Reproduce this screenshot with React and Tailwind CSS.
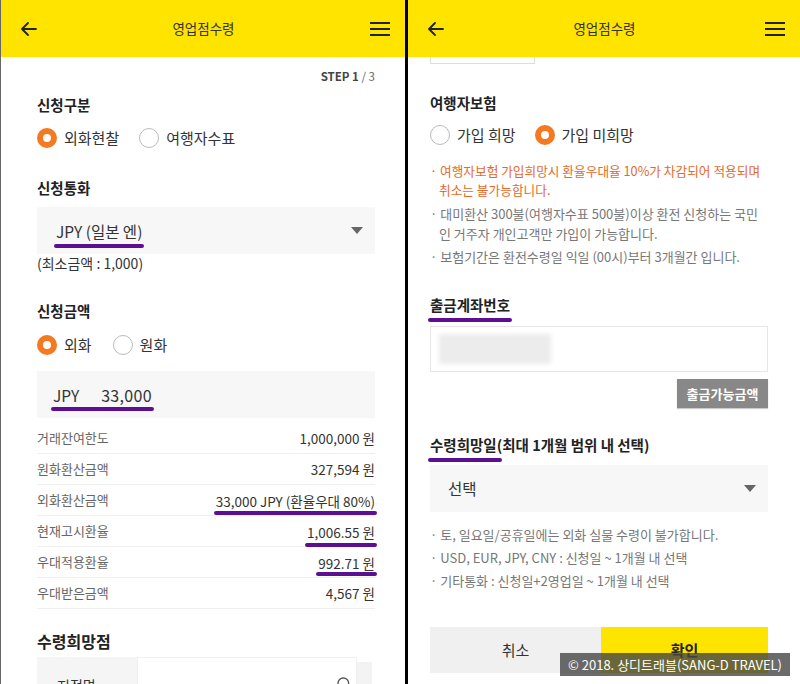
import { Search } from 'lucide-react';

const FONT = { fontFamily: '"Noto Sans CJK KR", "Noto Sans", sans-serif' };

function Header() {
  return (
    <div className="h-[57px] shrink-0 bg-[#FFE400] flex items-center justify-between pl-[19px] pr-[14px]">
      <svg width="18" height="16" viewBox="0 0 18 16" fill="none" stroke="#222" strokeWidth="1.8" strokeLinecap="round" strokeLinejoin="round">
        <path d="M16 8H2M8 2L2 8l6 6" />
      </svg>
      <span className="text-[13.5px] text-[#333]">영업점수령</span>
      <svg width="22" height="16" viewBox="0 0 22 16" fill="none" stroke="#222" strokeWidth="2">
        <path d="M1 2h20M1 8h20M1 14h20" />
      </svg>
    </div>
  );
}

function Radio({ on, label, className = '' }) {
  return (
    <div className={`flex items-center gap-[7px] ${className}`}>
      {on ? (
        <span className="w-[20px] h-[20px] rounded-full border-[6px] border-[#F47920] bg-white" />
      ) : (
        <span className="w-[20px] h-[20px] rounded-full border border-[#bbb] bg-white" />
      )}
      <span className="text-[15px] text-[#333]">{label}</span>
    </div>
  );
}

function Mark({ children, className = '' }) {
  return (
    <span className="relative inline-block">
      {children}
      <span className={`absolute left-[-2px] right-[-2px] h-[4px] rounded-full bg-[#5d0f93] ${className}`} />
    </span>
  );
}

function Caret() {
  return (
    <svg width="12" height="7" viewBox="0 0 12 7">
      <path d="M0 0h12L6 7z" fill="#666" />
    </svg>
  );
}

const ROWS = [
  ['거래잔여한도', '1,000,000 원'],
  ['원화환산금액', '327,594 원'],
  ['외화환산금액', '33,000 JPY (환율우대 80%)', 'top-[23px]'],
  ['현재고시환율', '1,006.55 원', 'top-[24px]'],
  ['우대적용환율', '992.71 원', 'top-[22px]'],
  ['우대받은금액', '4,567 원'],
];

function LeftPanel() {
  return (
    <div className="w-[405px] shrink-0 bg-white border-l border-[#666] flex flex-col overflow-hidden">
      <Header />
      <div className="pl-[36px] pr-[30px] flex flex-col">
        <div className="self-end mt-[11px] text-[11.5px] font-bold text-[#444] leading-[16px]">
          STEP 1 <span className="font-normal text-[#666]">/ 3</span>
        </div>
        <div className="mt-[11px] text-[14.5px] font-bold text-[#222] leading-[20px]">신청구분</div>
        <div className="mt-[13px] flex items-center h-[20px]">
          <Radio on label="외화현찰" />
          <Radio label="여행자수표" className="ml-[20px]" />
        </div>
        <div className="mt-[30px] text-[14.5px] font-bold text-[#222] leading-[20px]">신청통화</div>
        <div className="mt-[9px] h-[47px] bg-[#f7f7f7] flex items-center justify-between pl-[19px] pr-[12px]">
          <Mark className="top-[25px]">
            <span className="text-[15.5px] text-[#333] leading-[20px]">JPY (일본 엔)</span>
          </Mark>
          <Caret />
        </div>
        <div className="text-[14px] text-[#333] leading-[16px] mt-[1px]">(최소금액 : 1,000)</div>
        <div className="mt-[30px] text-[14.5px] font-bold text-[#222] leading-[20px]">신청금액</div>
        <div className="mt-[14px] flex items-center h-[20px]">
          <Radio on label="외화" />
          <Radio label="원화" className="ml-[21px]" />
        </div>
        <div className="mt-[16px] h-[47px] bg-[#f7f7f7] flex items-center pl-[16px]">
          <Mark className="top-[24px]">
            <span className="text-[15.5px] text-[#333] leading-[20px]">
              JPY<span className="ml-[22px] text-[16px] tracking-[0.3px]">33,000</span>
            </span>
          </Mark>
        </div>
        <div className="mt-[5px] flex flex-col">
          {ROWS.map(([k, v, m]) => (
            <div key={k} className="h-[31px] border-b border-[#efefef] flex items-center justify-between">
              <span className="text-[13px] text-[#666]">{k}</span>
              {m ? (
                <Mark className={m}>
                  <span className="text-[13.5px] text-[#333]">{v}</span>
                </Mark>
              ) : (
                <span className="text-[13.5px] text-[#333]">{v}</span>
              )}
            </div>
          ))}
        </div>
        <div className="mt-[21px] text-[16px] font-bold text-[#222] leading-[22px]">수령희망점</div>
        <div className="mt-[5px] flex h-[40px]">
          <div className="w-[100px] bg-[#f5f5f5] pl-[20px] pt-[18px] text-[14px] text-[#333]">지점명</div>
          <div className="w-[220px] border border-[#f0f0f0] flex justify-end pr-[4px] pt-[18px]">
            <Search size={16} color="#555" />
          </div>
          <div className="w-[15px] mt-[5px] bg-[#f3f3f3]" />
        </div>
      </div>
    </div>
  );
}

function RightPanel() {
  return (
    <div className="relative flex-1 bg-white flex flex-col overflow-hidden">
      <Header />
      <div className="pl-[22px] pr-[32px] flex flex-col">
        <div className="w-[105px] h-[7px] border-x border-b border-[#ddd]" />
        <div className="mt-[29px] text-[14.5px] font-bold text-[#222] leading-[20px]">여행자보험</div>
        <div className="mt-[12px] flex items-center h-[20px]">
          <Radio label="가입 희망" />
          <Radio on label="가입 미희망" className="ml-[19px]" />
        </div>
        <div className="mt-[16px] text-[12.7px] leading-[19px] text-[#e5692b] pl-[9px] -indent-[9px] -mr-[2px]">
          · 여행자보험 가입희망시 환율우대율 10%가 차감되어 적용되며 취소는 불가능합니다.
        </div>
        <div className="mt-[5px] text-[13px] leading-[20px] text-[#777] pl-[9px] -indent-[9px] break-all">
          · 대미환산 300불(여행자수표 500불)이상 환전 신청하는 국민인 거주자 개인고객만 가입이 가능합니다.
        </div>
        <div className="mt-[3px] text-[13px] leading-[20px] text-[#777]">
          · 보험기간은 환전수령일 익일 (00시)부터 3개월간 입니다.
        </div>
        <div className="mt-[28px] text-[14.5px] font-bold text-[#222] leading-[20px] self-start">
          <Mark className="top-[23px]">출금계좌번호</Mark>
        </div>
        <div className="mt-[11px] h-[46px] border border-[#e6e6e6] pl-[8px] pt-[7px]">
          <div className="w-[112px] h-[30px] bg-[#ececec] blur-[2px]" />
        </div>
        <div className="self-end mt-[7px] h-[29px] w-[91px] bg-[#888] text-white text-[13px] font-bold flex items-center justify-center shadow-[0_1px_1px_rgba(0,0,0,0.2)]">
          출금가능금액
        </div>
        <div className="mt-[27px] text-[14.5px] font-bold text-[#222] leading-[20px] self-start">
          <Mark className="top-[23px] right-auto w-[74px]">수령희망일</Mark>(최대 1개월 범위 내 선택)
        </div>
        <div className="mt-[10px] h-[47px] bg-[#f7f7f7] flex items-center justify-between pl-[18px] pr-[12px]">
          <span className="text-[15.5px] text-[#333]">선택</span>
          <Caret />
        </div>
        <div className="mt-[13px] flex flex-col gap-[3px] text-[13px] leading-[20px] text-[#777]">
          <div>· 토, 일요일/공휴일에는 외화 실물 수령이 불가합니다.</div>
          <div>· USD, EUR, JPY, CNY : 신청일 ~ 1개월 내 선택</div>
          <div>· 기타통화 : 신청일+2영업일 ~ 1개월 내 선택</div>
        </div>
        <div className="mt-[36px] flex h-[46px]">
          <div className="w-[171px] bg-[#f0f0f0] flex items-center justify-center text-[15px] text-[#333]">취소</div>
          <div className="flex-1 bg-[#FFE400] flex items-center justify-center text-[15px] font-bold text-[#222]">확인</div>
        </div>
      </div>
      <div className="absolute right-[10px] top-[653px] h-[23px] px-[8px] bg-[rgba(70,70,70,0.8)] text-white text-[13px] flex items-center">
        © 2018. 상디트래블(SANG-D TRAVEL)
      </div>
    </div>
  );
}

export default function App() {
  return (
    <div className="w-[800px] h-[684px] flex bg-black overflow-hidden gap-[3px]" style={FONT}>
      <LeftPanel />
      <RightPanel />
    </div>
  );
}
